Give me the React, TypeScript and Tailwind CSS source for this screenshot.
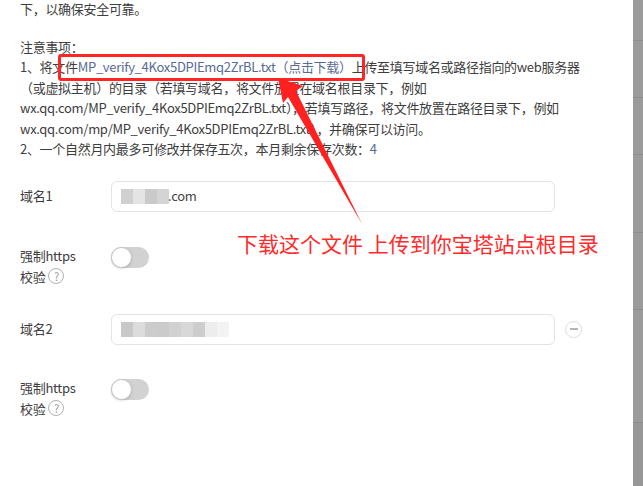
import React from "react"

const font = { fontFamily: '"Noto Sans CJK SC", "Noto Sans", sans-serif' }

const Blur = ({ cells }: { cells: string[] }) => (
    <div className="flex h-[15px]">
        {cells.map((c, i) => (
            <div key={i} className={`w-[12px] h-full ${c}`} />
        ))}
    </div>
)

const Toggle = () => (
    <div className="relative w-[38px] h-[21px] rounded-full bg-[#d2d2d2]">
        <div className="absolute left-0 top-0 w-[21px] h-[21px] rounded-full bg-white border border-[#c4c4c4] shadow-sm" />
    </div>
)

const HttpsRow = ({ className }: { className: string }) => (
    <div className={`flex ${className}`}>
        <div className="w-[91px] text-[13px] leading-[21px]">
            <div>强制https</div>
            <div className="flex items-center gap-[3px]">
                校验
                <span className="inline-flex items-center justify-center w-[16px] h-[16px] rounded-full border border-[#b0b0b0] text-[11px] leading-none text-[#999]">?</span>
            </div>
        </div>
        <div className="pt-[2px]">
            <Toggle />
        </div>
    </div>
)

export default function App() {
    return (
        <div className="relative w-[643px] h-[486px] overflow-hidden bg-white flex" style={font}>
            <div className="flex-1 pl-[20px] text-[13px] text-[#3d3d3d] tracking-[-0.3px]">

                {/* // top text and notes */}
                <div className="leading-[20.5px] -mt-[1px] whitespace-nowrap">
                    <p>下，以确保安全可靠。</p>
                    <p className="mt-[17px]">注意事项：</p>
                    <p>1、将文件<span className="text-[#576b95]">MP_verify_4Kox5DPIEmq2ZrBL.txt（点击下载）</span>上传至填写域名或路径指向的web服务器</p>
                    <p>（或虚拟主机）的目录（若填写域名，将文件放置在域名根目录下，例如</p>
                    <p>wx.qq.com/MP_verify_4Kox5DPIEmq2ZrBL.txt），若填写路径，将文件放置在路径目录下，例如</p>
                    <p>wx.qq.com/mp/MP_verify_4Kox5DPIEmq2ZrBL.txt），并确保可以访问。</p>
                    <p>2、一个自然月内最多可修改并保存五次，本月剩余保存次数：<span className="text-[#576b95]">4</span></p>
                </div>

                {/* // domain 1 */}
                <div className="flex items-center mt-[21px]">
                    <div className="w-[91px]">域名1</div>
                    <div className="w-[444px] h-[31px] rounded-[6px] border border-[#e3e3e3] flex items-center pl-[9px]">
                        <Blur cells={["bg-[#d0d0d0]", "bg-[#e4e4e4]", "bg-[#cacaca]", "bg-[#d4d4d4]"]} />
                        <span className="text-[#444] -ml-[1px]">.com</span>
                    </div>
                </div>

                <HttpsRow className="mt-[33px]" />

                {/* // domain 2 */}
                <div className="flex items-center mt-[27px]">
                    <div className="w-[91px]">域名2</div>
                    <div className="w-[444px] h-[31px] rounded-[6px] border border-[#e3e3e3] flex items-center pl-[9px]">
                        <Blur cells={["bg-[#c8c8c8]", "bg-[#dcdcdc]", "bg-[#cccccc]", "bg-[#cbcbcb]", "bg-[#d1d1d1]", "bg-[#d8d8d8]", "bg-[#cdcdcd]", "bg-[#ededed]", "bg-[#f3f3f3]"]} />
                    </div>
                    <div className="ml-[10px] w-[17px] h-[17px] rounded-full border border-[#dedede] flex items-center justify-center">
                        <div className="w-[8px] h-[2px] bg-[#b5b5b5]" />
                    </div>
                </div>

                <HttpsRow className="mt-[32px]" />
            </div>

            {/* // gray strip on the right */}
            <div className="w-[10px] h-full bg-[#9b9b9b] flex flex-col">
                <div className="h-[41px] border-b border-[#8d8d8d]" />
                <div className="h-[57px] border-b border-[#8d8d8d]" />
                <div className="h-[57px] border-b border-[#8d8d8d]" />
                <div className="h-[78px] border-b border-[#8d8d8d]" />
                <div className="h-[77px] border-b border-[#8d8d8d]" />
                <div className="h-[113px] border-b border-[#8d8d8d]" />
                <div className="flex-1 bg-[#979797]" />
            </div>

            {/* // annotations */}
            <div className="absolute left-[58px] top-[54px] w-[307px] h-[27px] border-[3px] border-[#ff2525] rounded-[3px]" />
            <svg className="absolute left-0 top-0" width="643" height="486">
                <polygon points="278,78 303,86 296,91 362,224 288,97 283,103" fill="#ff2020" />
            </svg>
            <div className="absolute left-[237px] top-[229px] text-[21px] leading-[28px] text-[#ff2a2a] whitespace-nowrap">
                下载这个文件 上传到你宝塔站点根目录
            </div>
        </div>
    )
}
